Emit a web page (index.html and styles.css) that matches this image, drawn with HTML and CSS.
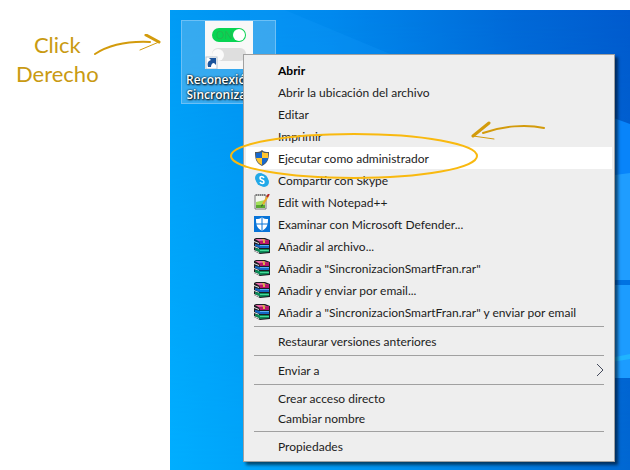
FILE: index.html
```html
<!DOCTYPE html>
<html lang="es">
<head>
    <meta charset="UTF-8">
    <meta name="viewport" content="width=device-width, initial-scale=1.0">
    <title>Ejecutar como administrador</title>
    <link rel="stylesheet" href="styles.css">
</head>
<body>

<!-- Shared icons -->
<svg class="sprite" aria-hidden="true">
    <symbol id="books" viewBox="0 0 16 16">
        <path d="M0 1l2-1h9l5 2v13l-10 1-6-3z" fill="#1c1c22"/>
        <path d="M1 1h9l5 2-9 1z" fill="#e86aa8"/>
        <path d="M5 3l10-1v4H6z" fill="#b8146c"/>
        <path d="M0 3l5 2v1L0 4z" fill="#e8e8e8"/>
        <path d="M1 6l5 1h9v3H6L1 8z" fill="#1468c4"/>
        <path d="M6 7h9v1H6z" fill="#58b0f4"/>
        <path d="M0 8l5 2v1L0 9z" fill="#e8e8e8"/>
        <path d="M1 10l5 1h9v3l-9 1-5-3z" fill="#0c8c58"/>
        <path d="M6 12h9v1H6z" fill="#48d898"/>
        <path d="M0 12l5 2v1l-5-2z" fill="#e8e8e8"/>
        <path d="M8 1h2l1 2v2H9V3z" fill="#d8b048"/>
    </symbol>
</svg>

<div class="page">
    <div class="note">
        <p class="note-text">Click<br>Derecho</p>
        <svg class="note-arrow" viewBox="0 0 68 24" fill="none" stroke="#d39b0c" stroke-linecap="round">
            <path d="M1 20C15 11 34 7 56 8" stroke-width="2"/>
            <path d="M52 1l13 7" stroke-width="3"/>
            <path d="M65 8L46 16" stroke-width="1"/>
        </svg>
    </div>

    <div class="desktop">
        <svg class="wallpaper" viewBox="0 0 460 460" preserveAspectRatio="none" aria-hidden="true">
            <defs>
                <linearGradient id="sky" x1="0" y1="0" x2="1" y2="0">
                    <stop offset="0" stop-color="#009cf5"/>
                    <stop offset=".35" stop-color="#0089ee"/>
                    <stop offset=".75" stop-color="#0069d8"/>
                    <stop offset="1" stop-color="#005bce"/>
                </linearGradient>
                <linearGradient id="floor" x1="0" y1="0" x2="1" y2="0">
                    <stop offset="0" stop-color="#00aeff"/>
                    <stop offset=".5" stop-color="#0090ed"/>
                    <stop offset="1" stop-color="#0067d2"/>
                </linearGradient>
                <linearGradient id="fade" x1="0" y1="0" x2="0" y2="1">
                    <stop offset="0" stop-color="#fff" stop-opacity="0"/>
                    <stop offset="1" stop-color="#fff"/>
                </linearGradient>
                <mask id="lower"><rect width="460" height="460" fill="url(#fade)"/></mask>
            </defs>
            <rect width="460" height="460" fill="url(#sky)"/>
            <rect width="460" height="460" fill="url(#floor)" mask="url(#lower)"/>
            <path d="M115 0l110 46H80V0z" fill="#18a0ff" opacity=".2"/>
            <path d="M430 103l30 11v60h-30z" fill="#0884fa"/>
            <path d="M430 167l30-4v107h-30z" fill="#1f9dff"/>
            <path d="M430 270h30v5h-30z" fill="#0072e2"/>
            <path d="M430 275h30v93h-30z" fill="#1c9cff"/>
            <path d="M430 350l30-6v5l-30 5z" fill="#20b4ff"/>
        </svg>

        <button class="shortcut">
            <svg class="shortcut-icon" viewBox="0 0 48 48">
                <rect width="48" height="48" fill="#f8f8f8"/>
                <rect x="7" y="7" width="34" height="14" rx="7" fill="#08d453"/>
                <text x="11" y="18" font-family="Open Sans, sans-serif" font-size="11" fill="#22b950">ON</text>
                <circle cx="34" cy="14" r="6" fill="#fff"/>
                <rect x="7" y="27" width="34" height="13" rx="6" fill="#dedede"/>
                <circle cx="13" cy="34" r="6" fill="#fafafa"/>
                <rect x="1" y="36" width="11" height="12" fill="#fff" stroke="#b8c4d0"/>
                <path d="M3 46c-1-4 0-6 3-7l-2-2h7v7l-2-2c-2 0-3 2-3 4z" fill="#1c549c"/>
            </svg>
            <span class="shortcut-name">Reconexión de Sincronización</span>
        </button>

        <div class="menu" role="menu">
            <button class="item default" role="menuitem"><span class="label">Abrir</span></button>
            <button class="item" role="menuitem"><span class="label">Abrir la ubicación del archivo</span></button>
            <button class="item" role="menuitem"><span class="label">Editar</span></button>
            <button class="item" role="menuitem"><span class="label">Imprimir</span></button>
            <button class="item active" role="menuitem">
                <svg class="icon" viewBox="0 0 16 16">
                    <path d="M8 0c2 2 4 2 7 2 0 7-1 11-7 14C2 13 1 9 1 2c3 0 5 0 7-2z" fill="#515a60"/>
                    <path d="M8 2v6H2V3c3 0 4 0 6-1z" fill="#1768cc"/>
                    <path d="M8 2c2 1 3 1 6 1v5H8z" fill="#ffc52e"/>
                    <path d="M2 8h6v7c-4-2-5-4-6-7z" fill="#ffc52e"/>
                    <path d="M8 8h6c-1 3-2 5-6 7z" fill="#1768cc"/>
                </svg>
                <span class="label">Ejecutar como administrador</span>
            </button>
            <button class="item" role="menuitem">
                <svg class="icon" viewBox="0 0 16 16">
                    <circle cx="6" cy="6" r="5" fill="#22a9e8"/>
                    <circle cx="10" cy="10" r="5" fill="#22a9e8"/>
                    <circle cx="8" cy="8" r="6" fill="#22a9e8"/>
                    <path d="M10 6C9 4 6 4 6 6c0 3 4 1 4 4 0 2-3 2-4 0" fill="none" stroke="#fff" stroke-width="1.6"/>
                </svg>
                <span class="label">Compartir con Skype</span>
            </button>
            <button class="item" role="menuitem">
                <svg class="icon" viewBox="0 0 16 16">
                    <path d="M1 1h11v14H1z" fill="#f4f7f2" stroke="#777"/>
                    <path d="M2 8l9-2v8H2z" fill="#a4e05c"/>
                    <path d="M2 11h9v3H2z" fill="#58a830"/>
                    <path d="M2 1h10" stroke="#444" stroke-dasharray="1 1"/>
                    <path d="M14 2L9 10" stroke="#e9aa28" stroke-width="2"/>
                    <path d="M15 0l-2 3" stroke="#b62828" stroke-width="2"/>
                    <path d="M8 10l-1 3 2-2z" fill="#333"/>
                </svg>
                <span class="label">Edit with Notepad++</span>
            </button>
            <button class="item" role="menuitem">
                <svg class="icon" viewBox="0 0 16 16">
                    <rect width="16" height="16" fill="#0874d8"/>
                    <path d="M8 1c2 2 3 2 6 2 0 6-1 9-6 12C3 12 2 9 2 3c3 0 4 0 6-2z" fill="#fff"/>
                    <path d="M8 1v14M2 8h12" stroke="#0874d8"/>
                </svg>
                <span class="label">Examinar con Microsoft Defender...</span>
            </button>
            <button class="item" role="menuitem"><svg class="icon"><use href="#books"/></svg><span class="label">Añadir al archivo...</span></button>
            <button class="item" role="menuitem"><svg class="icon"><use href="#books"/></svg><span class="label">Añadir a "SincronizacionSmartFran.rar"</span></button>
            <button class="item" role="menuitem"><svg class="icon"><use href="#books"/></svg><span class="label">Añadir y enviar por email...</span></button>
            <button class="item" role="menuitem"><svg class="icon"><use href="#books"/></svg><span class="label">Añadir a "SincronizacionSmartFran.rar" y enviar por email</span></button>
            <hr class="separator">
            <button class="item" role="menuitem"><span class="label">Restaurar versiones anteriores</span></button>
            <hr class="separator">
            <button class="item" role="menuitem" aria-haspopup="true">
                <span class="label">Enviar a</span>
                <svg class="chevron" viewBox="0 0 8 14"><path d="M1 1l6 6-6 6" fill="none" stroke="#444a5c"/></svg>
            </button>
            <hr class="separator">
            <button class="item short" role="menuitem"><span class="label">Crear acceso directo</span></button>
            <button class="item short" role="menuitem"><span class="label">Cambiar nombre</span></button>
            <hr class="separator">
            <button class="item" role="menuitem"><span class="label">Propiedades</span></button>

            <!-- Hand drawn marks over the menu -->
            <svg class="ring" viewBox="0 0 250 48"><ellipse cx="125" cy="24" rx="123" ry="22" fill="none" stroke="#f9b90f" stroke-width="2"/></svg>
            <svg class="ring-arrow" viewBox="0 0 76 20" fill="none" stroke="#d39b0c" stroke-linecap="round">
                <path d="M12 12C32 5 55 3 73 7" stroke-width="2"/>
                <path d="M18 2L2 15" stroke-width="3"/>
                <path d="M2 15l21 3" stroke-width="1"/>
            </svg>
        </div>
    </div>
</div>

</body>
</html>
```
FILE: styles.css
```css
body {
    margin: 0;
    background-color: #ffffff;
    font-family: Lato, "Open Sans", sans-serif;
    font-size: 12px;
    color: #1c1c1c;
}
button {
    margin: 0;
    border: none;
    background: none;
    font: inherit;
    color: inherit;
}
.sprite {
    position: absolute;
    width: 0;
    height: 0;
}
.page {
    display: flex;
    box-sizing: border-box;
    min-height: 100vh;
    padding-top: 10px;
}

/* Note on the left */
.note {
    display: flex;
    align-items: flex-start;
    box-sizing: border-box;
    flex: 0 0 170px;
    padding: 20px 8px 0 16px;
}
.note-text {
    margin: 0;
    font-size: 22px;
    line-height: 29px;
    text-align: center;
    color: #c99a12;
}
.note-arrow {
    flex: none;
    width: 68px;
    height: 24px;
    margin-left: -5px;
    margin-top: 4px;
}

/* Desktop */
.desktop {
    position: relative;
    flex: 1;
    padding: 10px 11px;
    background-color: #0094f0;
}
.wallpaper {
    position: absolute;
    top: 0;
    left: 0;
    width: 100%;
    height: 100%;
}
.shortcut {
    position: relative;
    display: flex;
    flex-direction: column;
    align-items: center;
    gap: 3px;
    box-sizing: border-box;
    width: 95px;
    padding: 0 2px 1px;
    border: 1px solid #6cc0f6;
    background-color: rgba(120, 190, 235, 0.45);
}
.shortcut-icon {
    width: 48px;
    height: 48px;
}
.shortcut-name {
    font-family: "Open Sans", "Noto Sans", sans-serif;
    font-weight: 600;
    line-height: 15px;
    color: #ffffff;
    text-shadow: 1px 1px 2px #000000, 0 0 2px #000000;
}

/* Context menu */
.menu {
    position: absolute;
    top: 44px;
    left: 73px;
    right: 15px;
    padding: 4px 2px;
    border: 1px solid #a0a0a0;
    background-color: #eeeeee;
    box-shadow: 3px 3px 3px rgba(0, 0, 0, 0.55);
}
.item {
    display: flex;
    align-items: center;
    width: 100%;
    height: 22px;
    padding: 0 8px 0 32px;
    text-align: left;
    white-space: nowrap;
}
.item.short {
    height: 20px;
}
.item.default {
    font-weight: bold;
    color: #000000;
}
.item.active {
    background-color: #ffffff;
}
.label {
    flex: 1;
}
.icon {
    flex: none;
    width: 16px;
    height: 16px;
    margin-left: -24px;
    margin-right: 8px;
}
.chevron {
    width: 8px;
    height: 14px;
}
.separator {
    height: 1px;
    margin: 3px 8px;
    border: none;
    background-color: #a0a0a0;
}
.ring {
    position: absolute;
    top: 77px;
    left: -15px;
    width: 250px;
    height: 48px;
    pointer-events: none;
}
.ring-arrow {
    position: absolute;
    top: 66px;
    left: 227px;
    width: 76px;
    height: 20px;
    pointer-events: none;
}
```
